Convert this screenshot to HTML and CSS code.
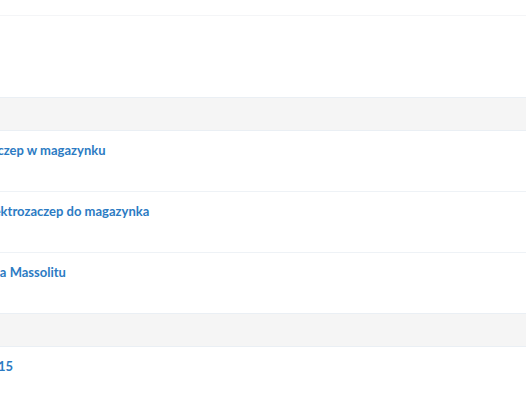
FILE: index.html
```html
<!DOCTYPE html>
<html lang="pl">
<head>
  <meta charset="UTF-8">
  <title>Urządzenia</title>
  <link rel="stylesheet" href="styles.css">
</head>
<body>

<div class="page">

  <div class="topbar"></div>

  <div class="panel-head"></div>

  <!-- lista urządzeń -->
  <div class="section-head"></div>
  <ul class="list">
    <li class="row"><a href="#">Zaczep w magazynku</a></li>
    <li class="row"><a href="#">Elektrozaczep do magazynka</a></li>
    <li class="row"><a href="#">Sala Massolitu</a></li>
  </ul>

  <div class="section-head"></div>
  <ul class="list">
    <li class="row"><a href="#">2015</a></li>
  </ul>

</div>

</body>
</html>
```

FILE: styles.css
```css
body {
  margin: 0;
  font-family: Lato, "Open Sans", sans-serif;
  background-color: #fff;
  color: #333;
}

.page {
  overflow: hidden;
}

.topbar {
  height: 15px;
  border-bottom: 1px solid #f4f5f7;
}

.panel-head {
  height: 81px;
}

.section-head {
  height: 32px;
  background-color: #f5f5f5;
  border-top: 1px solid #eaeff4;
  border-bottom: 1px solid #eaeff4;
}

.list {
  list-style: none;
  margin: 0 0 0 -17px;
  padding: 0;
}

.row {
  height: 61px;
  box-sizing: border-box;
  padding-top: 12px;
  font-size: 13px;
  line-height: 15px;
  border-bottom: 1px solid #eef2f6;
}

.list .row:last-child {
  height: 60px;
  border-bottom: none;
}

.row a {
  color: #2c7bc3;
  font-weight: bold;
  text-decoration: none;
}
```
